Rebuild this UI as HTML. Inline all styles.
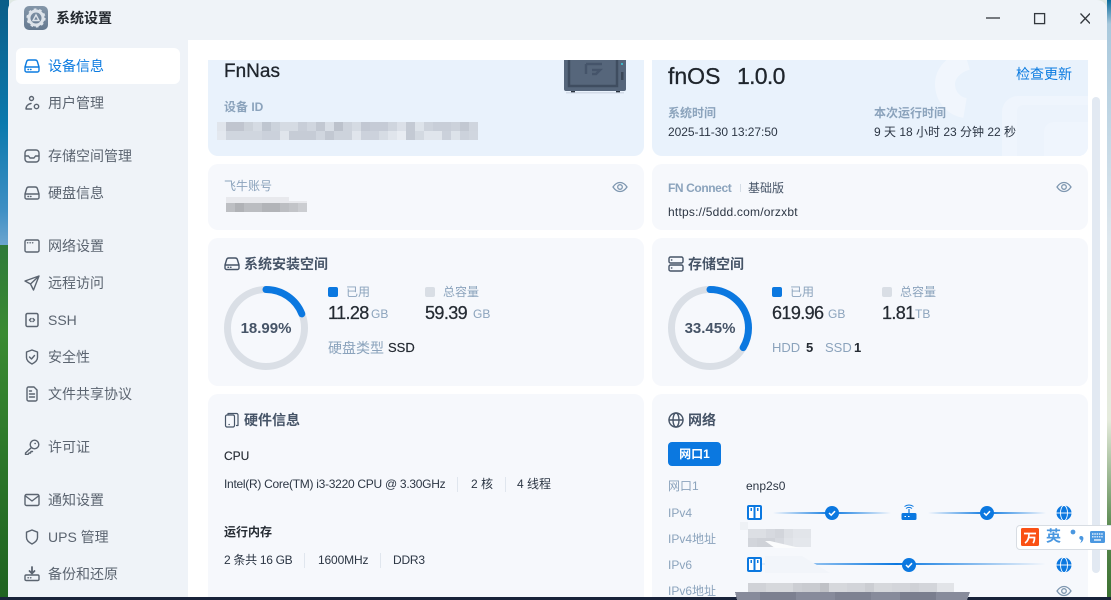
<!DOCTYPE html>
<html lang="zh"><head><meta charset="utf-8"><title>系统设置</title>
<style>
*{box-sizing:border-box}
html,body{margin:0;padding:0;width:1111px;height:600px;overflow:hidden;background:#dfe8e4}
body{position:relative;font-family:"Liberation Sans","Noto Sans CJK SC",sans-serif;font-size:12px;color:#2c3644}
.a{position:absolute}
.t{position:absolute;white-space:nowrap;line-height:20px;transform:translateY(-50%)}
.nav{font-size:14px;color:#5b6470;left:48px}
.ic{position:absolute;fill:none;stroke:#5b6470;stroke-width:1.4;stroke-linecap:round;stroke-linejoin:round}
.card{position:absolute;background:#f6f8fc;border-radius:10px}
.lb{color:#8ba3bc}
.h{font-size:14px;font-weight:bold;color:#465467}
.num{font-size:18px;color:#252b33;letter-spacing:-.6px;-webkit-text-stroke:.25px #252b33}
.u{font-size:12px;color:#8ba3bc}
.sep{position:absolute;width:1px;height:15px;background:#e0e6ee}
.sq{position:absolute;width:10px;height:10px;border-radius:2px}
.big{-webkit-text-stroke:.3px #1f252c;color:#1f252c}
</style></head><body>
<!-- desktop background -->
<div class="a" style="left:0;top:0;width:9px;height:247px;background:linear-gradient(#0a5d88,#0a79ad 50%,#3f8fc4 85%,#6ea6d0)"></div>
<div class="a" style="left:0;top:245px;width:9px;height:355px;background:linear-gradient(#2f7a3a,#3a8a32 25%,#2a7428 65%,#1f6220)"></div>
<div class="a" style="left:1107px;top:0;width:4px;height:600px;background:linear-gradient(#0a6a9c 0,#a8c8dc 4%,#dfe8ee 40%,#e5ebdc 70%,#5a8a50 88%,#3a7030)"></div>
<!-- window -->
<div class="a" style="left:8px;top:0;width:1099px;height:597px;background:#eff3f8;border-radius:10px 10px 0 0"></div>
<div class="a" style="left:188px;top:40px;width:919px;height:557px;background:#fff;border-radius:12px 0 0 0"></div>
<div class="a" style="left:0;top:597px;width:1111px;height:3px;background:#19233a"></div>

<!-- title -->
<svg class="a" style="left:24px;top:6px" width="24" height="24" viewBox="0 0 24 24"><defs><linearGradient id="g" x1="0" y1="0" x2="0" y2="1"><stop offset="0" stop-color="#8496a9"/><stop offset="1" stop-color="#657990"/></linearGradient></defs><rect width="24" height="24" rx="5" fill="url(#g)"/><circle cx="12" cy="12" r="7" fill="none" stroke="#dde3ea" stroke-width="3"/><circle cx="12" cy="12" r="8.4" fill="none" stroke="#dde3ea" stroke-width="2.4" stroke-dasharray="2.6 2.7"/><path d="M12 9l3 5.5H9z" fill="none" stroke="#dde3ea" stroke-width="1.4"/></svg>
<div class="t" style="left:56px;top:18px;font-size:14px;font-weight:bold;color:#23282e">系统设置</div>
<svg class="a" style="left:980px;top:8px" width="110" height="20" viewBox="0 0 110 20" fill="none" stroke="#33383e" stroke-width="1.3"><path d="M6 10h14"/><rect x="54.6" y="5.6" width="10" height="10"/><path d="M100.500 5.500l9.500 10M110 5.500l-9.500 10"/></svg>

<!-- sidebar -->
<div class="a" style="left:16px;top:48px;width:164px;height:36px;background:#fff;border-radius:6px"></div>
<div class="t nav" style="top:66px;color:#0b7be0">设备信息</div>
<div class="t nav" style="top:103px">用户管理</div>
<div class="t nav" style="top:156px">存储空间管理</div>
<div class="t nav" style="top:193px">硬盘信息</div>
<div class="t nav" style="top:246px">网络设置</div>
<div class="t nav" style="top:283px">远程访问</div>
<div class="t nav" style="top:320px">SSH</div>
<div class="t nav" style="top:357px">安全性</div>
<div class="t nav" style="top:394px">文件共享协议</div>
<div class="t nav" style="top:447px">许可证</div>
<div class="t nav" style="top:500px">通知设置</div>
<div class="t nav" style="top:537px">UPS 管理</div>
<div class="t nav" style="top:574px">备份和还原</div>

<svg class="ic" style="left:24px;top:58px;stroke:#0b7be0" width="16" height="16" viewBox="0 0 16 16"><path d="M1 9l1.500-5A2.500 2.500 0 0 1 5 2h6a2.500 2.500 0 0 1 2.500 2L15 9v3.500a1.500 1.500 0 0 1-1.500 1.500h-11A1.500 1.500 0 0 1 1 12.500zM1 9h14M4 11.500h.5M6.500 11.500h.5"/></svg>
<svg class="ic" style="left:24px;top:95px" width="16" height="16" viewBox="0 0 16 16"><circle cx="7.500" cy="3.500" r="2"/><path d="M2 14c0-3 2-5 5-5.500M2 14h5.500"/><circle cx="12.500" cy="11.500" r="2.200"/></svg>
<svg class="ic" style="left:24px;top:148px" width="16" height="16" viewBox="0 0 16 16"><rect x="1" y="2" width="14" height="12" rx="3"/><path d="M1 8h3.500l1.500 2h4l1.500-2H15"/></svg>
<svg class="ic" style="left:24px;top:185px" width="16" height="16" viewBox="0 0 16 16"><path d="M1 9l1.500-5A2.500 2.500 0 0 1 5 2h6a2.500 2.500 0 0 1 2.500 2L15 9v3.500a1.500 1.500 0 0 1-1.500 1.500h-11A1.500 1.500 0 0 1 1 12.500zM1 9h14M4 11.500h.5M6.500 11.500h.5"/></svg>
<svg class="ic" style="left:24px;top:238px" width="16" height="16" viewBox="0 0 16 16"><rect x="1" y="2" width="14" height="12" rx="1.500"/><path d="M3.500 4.800h.3M6 4.800h.3M8.500 4.800h.3"/></svg>
<svg class="ic" style="left:24px;top:275px" width="16" height="16" viewBox="0 0 16 16"><path d="M15 1L1 6l5.500 3L9.500 15zM6.500 9L15 1"/></svg>
<svg class="ic" style="left:24px;top:312px;stroke-width:1.500" width="16" height="16" viewBox="0 0 16 16"><rect x="2" y="1.500" width="12" height="13" rx="1.500"/><path d="M7 6.500L5.500 8 7 9.500M9 6.500L10.500 8 9 9.500"/></svg>
<svg class="ic" style="left:24px;top:349px" width="16" height="16" viewBox="0 0 16 16"><path d="M8 1l5.500 2v5.500c0 3-2.500 5-5.500 6.500-3-1.500-5.500-3.500-5.500-6.500V3zM5.500 8L7.500 10 10.500 6.500"/></svg>
<svg class="ic" style="left:24px;top:386px" width="16" height="16" viewBox="0 0 16 16"><path d="M3 2.500A1.500 1.500 0 0 1 4.500 1H10l3 3v9.500A1.500 1.500 0 0 1 11.500 15h-7A1.500 1.500 0 0 1 3 13.500zM5.500 8h5M5.500 11h5M5.500 5h2"/></svg>
<svg class="ic" style="left:24px;top:439px" width="16" height="16" viewBox="0 0 16 16"><circle cx="10.500" cy="5.500" r="4.300"/><path d="M7.500 8.500L1.500 14v1.500h2.500l1-1.500h1.500l.5-1.500h1.500"/><path d="M11 4.500h.3"/></svg>
<svg class="ic" style="left:24px;top:492px" width="16" height="16" viewBox="0 0 16 16"><rect x="1" y="2.500" width="14" height="11" rx="1.500"/><path d="M1.500 4L8 9l6.500-5"/></svg>
<svg class="ic" style="left:24px;top:529px" width="16" height="16" viewBox="0 0 16 16"><path d="M8 1l5.500 2.200v5.300c0 3-2.500 5-5.500 6.500-3-1.500-5.500-3.500-5.500-6.500V3.200z"/></svg>
<svg class="ic" style="left:24px;top:566px" width="16" height="16" viewBox="0 0 16 16"><path d="M8 1v6M5.500 5L8 7.500 10.500 5" stroke-width="1.800"/><rect x="1" y="9" width="14" height="5.500" rx="1.200"/><path d="M4 11.800h.4M6.500 11.800h.4"/></svg>

<!-- row 1 -->
<div class="card" style="left:208px;top:40px;width:436px;height:116px;background:#e9f2fc"></div>
<div class="card" style="left:652px;top:40px;width:436px;height:116px;background:#e9f2fc;overflow:hidden">
<svg class="a" style="left:0;top:0" width="436" height="116" fill="none"><path d="M315 20c-14 4-22 14-22 24 0 12 8 22 20 24" stroke="#f1f6fd" stroke-width="20"/><rect x="350" y="56" width="120" height="120" rx="16" fill="#eff5fd"/><rect x="365" y="65" width="100" height="100" rx="6" fill="#ecf3fc"/><rect x="392" y="82" width="60" height="60" rx="10" fill="#eff5fd"/></svg></div>
<div class="a" style="left:188px;top:40px;width:900px;height:20px;background:#fff"></div>
<svg class="a" style="left:564px;top:60px" width="62" height="34" viewBox="0 0 62 34"><rect x="0" y="-6" width="62" height="37" rx="2" fill="#56667b"/><rect x="5" y="-6" width="48" height="32" fill="none" stroke="#3f4d60" stroke-width="2.500"/><path d="M22 4h16M22 4v10M28 10h8l-4 4h-4" fill="none" stroke="#45546a" stroke-width="2.500"/><rect x="57" y="12" width="2.500" height="8" fill="#3a4757"/><rect x="57" y="3" width="2" height="2" fill="#3fb6c6"/><rect x="7" y="31" width="4" height="2" fill="#2a3440"/><rect x="52" y="31" width="4" height="2" fill="#2a3440"/><rect x="2" y="32" width="58" height="1.500" fill="#c7d2de" opacity=".7"/></svg>
<div class="t big" style="left:224px;top:72px;font-size:19px">FnNas</div>
<div class="t lb" style="left:224px;top:107px;font-weight:bold">设备 ID</div>
<svg class="a" style="left:217px;top:122px" width="261" height="18" shape-rendering="crispEdges">
<g><rect x="0" width="9" height="9" fill="#e0e5ec"/><rect x="9" width="18" height="9" fill="#c0c5cf"/><rect x="27" width="9" height="9" fill="#ccd2da"/><rect x="36" width="9" height="9" fill="#d5dbe3"/><rect x="45" width="9" height="9" fill="#bfc6d0"/><rect x="54" width="9" height="9" fill="#ccd3dc"/><rect x="63" width="18" height="9" fill="#d5dbe3"/><rect x="81" width="9" height="9" fill="#c8ced8"/><rect x="90" width="9" height="9" fill="#d0d6df"/><rect x="99" width="9" height="9" fill="#c2c8d2"/><rect x="108" width="9" height="9" fill="#d8dee6"/><rect x="117" width="9" height="9" fill="#bcc2cc"/><rect x="126" width="9" height="9" fill="#cdd3dc"/><rect x="135" width="9" height="9" fill="#d5dbe3"/><rect x="144" width="9" height="9" fill="#c2c8d3"/><rect x="153" width="18" height="9" fill="#c5cbd6"/><rect x="171" width="9" height="9" fill="#cfd5de"/><rect x="180" width="9" height="9" fill="#dbe0e8"/><rect x="189" width="9" height="9" fill="#c4cad4"/><rect x="198" width="9" height="9" fill="#dde3ea"/><rect x="207" width="9" height="9" fill="#cdd3dc"/><rect x="216" width="18" height="9" fill="#c8ced8"/><rect x="234" width="9" height="9" fill="#ccd2db"/><rect x="243" width="9" height="9" fill="#c2c8d2"/><rect x="252" width="9" height="9" fill="#cfd5de"/></g>
<g transform="translate(0 9)"><rect width="9" height="9" fill="#e3e8ef"/><rect x="9" width="36" height="9" fill="#d0d6df"/><rect x="45" width="18" height="9" fill="#cbd1db"/><rect x="63" width="9" height="9" fill="#e0e5ec"/><rect x="72" width="27" height="9" fill="#c6ccd6"/><rect x="99" width="9" height="9" fill="#d0d6df"/><rect x="108" width="9" height="9" fill="#c2c8d2"/><rect x="117" width="18" height="9" fill="#cdd3dc"/><rect x="135" width="9" height="9" fill="#e0e5ec"/><rect x="144" width="18" height="9" fill="#ccd2dc"/><rect x="162" width="9" height="9" fill="#d6dce4"/><rect x="171" width="9" height="9" fill="#e0e5ec"/><rect x="180" width="9" height="9" fill="#e8ecf2"/><rect x="189" width="9" height="9" fill="#c4cad4"/><rect x="198" width="9" height="9" fill="#d3d9e1"/><rect x="207" width="18" height="9" fill="#e0e5ec"/><rect x="225" width="9" height="9" fill="#cbd1db"/><rect x="234" width="9" height="9" fill="#dde3ea"/><rect x="243" width="9" height="9" fill="#ccd2dc"/><rect x="252" width="9" height="9" fill="#d0d6df"/></g></svg>

<div class="t big" style="left:668px;top:76px;font-size:23px">fnOS</div>
<div class="t big" style="left:737px;top:76px;font-size:23px;letter-spacing:-.7px">1.0.0</div>
<div class="t" style="left:1016px;top:74px;font-size:14px;color:#0b7be0">检查更新</div>
<div class="t lb" style="left:668px;top:113px;font-weight:bold">系统时间</div>
<div class="t lb" style="left:874px;top:113px;font-weight:bold">本次运行时间</div>
<div class="t" style="left:668px;top:132px;letter-spacing:-.05px">2025-11-30 13:27:50</div>
<div class="t" style="left:874px;top:132px">9 天 18 小时 23 分钟 22 秒</div>

<!-- row 2 -->
<div class="card" style="left:208px;top:164px;width:436px;height:66px"></div>
<div class="card" style="left:652px;top:164px;width:436px;height:66px"></div>
<div class="t lb" style="left:224px;top:186px">飞牛账号</div>
<svg class="a" style="left:217px;top:197px" width="90" height="18" shape-rendering="crispEdges"><rect x="9" y="0" width="63" height="6" fill="#e8e9ed"/><rect x="72" y="4" width="18" height="5" fill="#e8e9ed"/><rect x="9" y="6" width="9" height="9" fill="#bdbfc3"/><rect x="18" y="6" width="9" height="9" fill="#b0b2b6"/><rect x="27" y="6" width="18" height="9" fill="#bbbdc1"/><rect x="45" y="6" width="18" height="9" fill="#b2b4b8"/><rect x="63" y="6" width="9" height="9" fill="#bcbec2"/><rect x="72" y="6" width="9" height="9" fill="#c2c4c8"/><rect x="81" y="6" width="9" height="9" fill="#cbcdd1"/></svg>
<svg class="a" style="left:612px;top:179px" width="16" height="16" viewBox="0 0 16 16" fill="none" stroke="#7e97b0" stroke-width="1.300"><path d="M1 8c2-3 4.500-4.500 7-4.500S13 5 15 8c-2 3-4.500 4.500-7 4.500S3 11 1 8z"/><circle cx="8" cy="8" r="2.300"/></svg>
<div class="t lb" style="left:668px;top:188px;font-weight:bold;letter-spacing:-.4px">FN Connect</div>
<div class="a" style="left:740px;top:184px;width:1px;height:8px;background:#d5dde6"></div>
<div class="t" style="left:748px;top:188px;color:#465467">基础版</div>
<div class="t" style="left:668px;top:212px;letter-spacing:.22px">https://5ddd.com/orzxbt</div>
<svg class="a" style="left:1056px;top:179px" width="16" height="16" viewBox="0 0 16 16" fill="none" stroke="#7e97b0" stroke-width="1.300"><path d="M1 8c2-3 4.500-4.500 7-4.500S13 5 15 8c-2 3-4.500 4.500-7 4.500S3 11 1 8z"/><circle cx="8" cy="8" r="2.300"/></svg>

<!-- row 3 -->
<div class="card" style="left:208px;top:238px;width:436px;height:148px"></div>
<div class="card" style="left:652px;top:238px;width:436px;height:148px"></div>
<svg class="ic" style="left:224px;top:256px;stroke:#465467" width="16" height="16" viewBox="0 0 16 16"><path d="M1 9l1.500-5A2.500 2.500 0 0 1 5 2h6a2.500 2.500 0 0 1 2.500 2L15 9v3a1.500 1.500 0 0 1-1.500 1.500h-11A1.500 1.500 0 0 1 1 12zM1 9h14M4 11.300h.5M6.500 11.300h.5"/></svg>
<div class="t h" style="left:244px;top:264px">系统安装空间</div>
<svg class="a" style="left:224px;top:286px" width="84" height="84" viewBox="0 0 84 84" fill="none"><circle cx="42" cy="42" r="38.500" stroke="#dadfe6" stroke-width="7"/><circle cx="42" cy="42" r="38.500" stroke="#0b78e0" stroke-width="7" stroke-linecap="round" stroke-dasharray="45.900 242" transform="rotate(-90 42 42)"/></svg>
<div class="t" style="left:224px;top:329px;width:84px;text-align:center;font-size:15px;font-weight:bold;color:#465467">18.99%</div>
<div class="sq" style="left:328px;top:287px;background:#0b78e0"></div>
<div class="t lb" style="left:346px;top:292px">已用</div>
<div class="sq" style="left:425px;top:287px;background:#d9dee5"></div>
<div class="t lb" style="left:443px;top:292px">总容量</div>
<div class="t num" style="left:328px;top:313px">11.28</div><div class="t u" style="left:371px;top:314px">GB</div>
<div class="t num" style="left:425px;top:313px">59.39</div><div class="t u" style="left:473px;top:314px">GB</div>
<div class="t lb" style="left:328px;top:348px;font-size:14px">硬盘类型</div>
<div class="t" style="left:388px;top:348px;font-size:13px;color:#252b33;-webkit-text-stroke:.2px #252b33">SSD</div>

<svg class="ic" style="left:668px;top:256px;stroke:#465467" width="16" height="16" viewBox="0 0 16 16"><rect x="1" y="1" width="14" height="6" rx="1.500"/><rect x="1" y="9" width="14" height="6" rx="1.500"/><path d="M3.500 4h.3M3.500 12h.3"/></svg>
<div class="t h" style="left:688px;top:264px">存储空间</div>
<svg class="a" style="left:668px;top:286px" width="84" height="84" viewBox="0 0 84 84" fill="none"><circle cx="42" cy="42" r="38.500" stroke="#dadfe6" stroke-width="7"/><circle cx="42" cy="42" r="38.500" stroke="#0b78e0" stroke-width="7" stroke-linecap="round" stroke-dasharray="80.900 242" transform="rotate(-90 42 42)"/></svg>
<div class="t" style="left:668px;top:329px;width:84px;text-align:center;font-size:15px;font-weight:bold;color:#465467">33.45%</div>
<div class="sq" style="left:772px;top:287px;background:#0b78e0"></div>
<div class="t lb" style="left:790px;top:292px">已用</div>
<div class="sq" style="left:882px;top:287px;background:#d9dee5"></div>
<div class="t lb" style="left:900px;top:292px">总容量</div>
<div class="t num" style="left:772px;top:313px">619.96</div><div class="t u" style="left:828px;top:314px">GB</div>
<div class="t num" style="left:882px;top:313px">1.81</div><div class="t u" style="left:915px;top:314px">TB</div>
<div class="t lb" style="left:772px;top:348px;font-size:13px">HDD</div><div class="t" style="left:806px;top:348px;font-size:13px;font-weight:bold;color:#252b33">5</div>
<div class="t lb" style="left:825px;top:348px;font-size:13px">SSD</div><div class="t" style="left:854px;top:348px;font-size:13px;font-weight:bold;color:#252b33">1</div>

<!-- row 4 -->
<div class="card" style="left:208px;top:394px;width:436px;height:203px;border-radius:10px 10px 0 0"></div>
<div class="card" style="left:652px;top:394px;width:436px;height:203px;border-radius:10px 10px 0 0"></div>
<svg class="ic" style="left:224px;top:412px;stroke:#465467;stroke-width:1.200" width="16" height="16" viewBox="0 0 16 16"><rect x="1.500" y="3" width="9" height="12" rx="1.500"/><path d="M4 3V1.500h8.500A1.500 1.500 0 0 1 14 3v10.500h-1.500M5 12.500h.3"/></svg>
<div class="t h" style="left:244px;top:420px">硬件信息</div>
<div class="t" style="left:224px;top:456px;color:#252b33;-webkit-text-stroke:.15px #252b33">CPU</div>
<div class="t" style="left:224px;top:484px;letter-spacing:-.28px">Intel(R) Core(TM) i3-3220 CPU @ 3.30GHz</div>
<div class="sep" style="left:457px;top:477px"></div>
<div class="t" style="left:471px;top:484px">2 核</div>
<div class="sep" style="left:505px;top:477px"></div>
<div class="t" style="left:517px;top:484px">4 线程</div>
<div class="t" style="left:224px;top:532px;font-weight:bold;color:#252b33">运行内存</div>
<div class="t" style="left:224px;top:560px;letter-spacing:-.3px">2 条共 16 GB</div>
<div class="sep" style="left:304px;top:553px"></div>
<div class="t" style="left:318px;top:560px;letter-spacing:-.15px">1600MHz</div>
<div class="sep" style="left:380px;top:553px"></div>
<div class="t" style="left:393px;top:560px;letter-spacing:-.2px">DDR3</div>

<svg class="ic" style="left:668px;top:412px;stroke:#465467" width="16" height="16" viewBox="0 0 16 16"><circle cx="8" cy="8" r="7"/><ellipse cx="8" cy="8" rx="3" ry="7"/><path d="M1 8h14"/></svg>
<div class="t h" style="left:688px;top:420px">网络</div>
<div class="a" style="left:668px;top:442px;width:53px;height:24px;background:#0b78e0;border-radius:4px;color:#fff;font-weight:bold;text-align:center;line-height:24px">网口1</div>
<div class="t lb" style="left:668px;top:486px">网口1</div><div class="t" style="left:746px;top:486px">enp2s0</div>
<div class="t lb" style="left:668px;top:513px">IPv4</div>
<div class="t lb" style="left:668px;top:539px">IPv4地址</div>
<div class="t lb" style="left:668px;top:565px">IPv6</div>
<div class="t lb" style="left:668px;top:591px">IPv6地址</div>

<svg class="a" style="left:740px;top:500px" width="340" height="100" viewBox="740 500 340 100">
<defs>
<linearGradient id="l"><stop offset="0" stop-color="#0b78e0" stop-opacity="0"/><stop offset=".5" stop-color="#0b78e0"/><stop offset="1" stop-color="#0b78e0" stop-opacity="0"/></linearGradient>
<g id="port"><rect x="0" y="0" width="15" height="15" rx="2" fill="#0b78e0"/><rect x="2" y="2" width="4.500" height="11" fill="#fff"/><rect x="8.500" y="2" width="4.500" height="11" fill="#fff"/><rect x="3.500" y="3" width="1.500" height="3" fill="#0b78e0"/><rect x="10" y="3" width="1.500" height="3" fill="#0b78e0"/></g>
<g id="ck"><circle r="7" fill="#0b78e0"/><path d="M-3 0l2.200 2.200L3 -1.800" fill="none" stroke="#fff" stroke-width="1.500"/></g>
<g id="gl"><circle r="7.500" fill="#0b78e0"/><ellipse rx="3.500" ry="7.500" fill="none" stroke="#fff" stroke-width=".9"/><path d="M-7.500 0h15" stroke="#fff" stroke-width=".9"/></g>
</defs>
<rect x="773" y="512" width="118" height="2" fill="url(#l)"/>
<rect x="928" y="512" width="118" height="2" fill="url(#l)"/>
<rect x="748" y="563" width="298" height="2" fill="url(#l)"/>
<use href="#port" x="747" y="505"/>
<use href="#port" x="747" y="557"/>
<use href="#ck" x="832" y="513"/>
<use href="#ck" x="987" y="513"/>
<use href="#ck" x="909" y="565"/>
<use href="#gl" x="1064" y="513"/>
<use href="#gl" x="1064" y="565"/>
<rect x="901.500" y="513" width="15" height="7" rx="1.500" fill="#0b78e0"/>
<path d="M909 513v-4" stroke="#0b78e0" stroke-width="1.200"/>
<path d="M906 508.500c2-1.500 4-1.500 6 0M904.500 506.500c3-2 6-2 9 0" fill="none" stroke="#0b78e0" stroke-width="1"/>
<path d="M904.500 516.500h1.500M908 516.500h1.500" stroke="#fff"/>
<!-- blur smear -->
<g shape-rendering="crispEdges">
<rect x="739" y="522" width="9" height="8" fill="#eef1f5"/><rect x="748" y="529" width="18" height="9" fill="#dcdfe4"/><rect x="766" y="529" width="9" height="9" fill="#d6d9df"/><rect x="775" y="529" width="9" height="9" fill="#d2d5db"/><rect x="784" y="529" width="9" height="9" fill="#dde0e5"/><rect x="793" y="529" width="18" height="9" fill="#e2e5ea"/>
<rect x="748" y="538" width="9" height="9" fill="#d2d5db"/><rect x="757" y="538" width="18" height="9" fill="#cfd2d8"/><rect x="775" y="538" width="9" height="9" fill="#d6d9df"/><rect x="784" y="538" width="9" height="9" fill="#e0e3e8"/><rect x="793" y="538" width="18" height="9" fill="#e4e7ec"/>
</g>
<path d="M765 541l5 0 30 7H775z" fill="#fbfcfd"/>
<path d="M765 556H802L830 573H765z" fill="#f2f5fa"/>
<g shape-rendering="crispEdges">
<rect x="748" y="583" width="18" height="9" fill="#d0d2d7"/><rect x="766" y="583" width="27" height="9" fill="#d6d8dc"/><rect x="793" y="583" width="9" height="9" fill="#ccced3"/><rect x="802" y="583" width="18" height="9" fill="#c9cbd0"/><rect x="820" y="583" width="9" height="9" fill="#bfc1c6"/><rect x="829" y="583" width="18" height="9" fill="#d6d8dc"/><rect x="847" y="583" width="18" height="9" fill="#d2d4d9"/><rect x="865" y="583" width="9" height="9" fill="#cbcdd2"/><rect x="874" y="583" width="18" height="9" fill="#d6d8dc"/><rect x="892" y="583" width="18" height="9" fill="#d3d5da"/><rect x="910" y="583" width="9" height="9" fill="#cfd1d6"/><rect x="919" y="583" width="18" height="9" fill="#d3d5da"/><rect x="937" y="583" width="17" height="9" fill="#e2e4e8"/>
</g>
</svg>
<svg class="a" style="left:735px;top:592px" width="235" height="8" viewBox="0 0 235 8" shape-rendering="crispEdges"><path d="M0 0H235L232 8H2z" fill="#878b9b"/><rect x="25" width="36" height="8" fill="#7c8090"/><rect x="100" width="36" height="8" fill="#7e8292"/><rect x="165" width="36" height="8" fill="#7a7e8e"/></svg>
<svg class="a" style="left:1056px;top:583px" width="16" height="16" viewBox="0 0 16 16" fill="none" stroke="#7e97b0" stroke-width="1.300"><path d="M1 8c2-3 4.500-4.500 7-4.500S13 5 15 8c-2 3-4.500 4.500-7 4.500S3 11 1 8z"/><circle cx="8" cy="8" r="2.300"/></svg>

<!-- scrollbar -->
<div class="a" style="left:1092px;top:97px;width:8px;height:476px;background:#e2e9f2;border-radius:4px"></div>

<!-- IME bar -->
<div class="a" style="left:1016px;top:525px;width:100px;height:25px;background:#fff;border:1px solid #d8dde3;border-radius:4px"></div>
<svg class="a" style="left:1021px;top:528px" width="18" height="18" viewBox="0 0 18 18"><rect width="18" height="18" rx="1.500" fill="#fa5014"/><path d="M3 5.500h12M8 5.500c0 5-1.500 8-4 9.500M7.500 9.500h6c0 2.500-.5 4.500-1.500 5.500" fill="none" stroke="#fff" stroke-width="1.700"/></svg>
<div class="t" style="left:1046px;top:537px;font-size:15px;font-weight:bold;color:#4a97e0">英</div>
<svg class="a" style="left:1068px;top:528px" width="40" height="18" viewBox="0 0 40 18"><circle cx="5" cy="4" r="2.400" fill="#4a97e0"/><path d="M13 8c1.700 0 2.400 1.100 2.400 2.300 0 2.200-1.200 3.800-3.400 4.900 .9-1.100 1.300-2.200 1.300-3.300-1.100 0-2-.9-2-2s.7-1.900 1.700-1.900z" fill="#4a97e0"/><rect x="22" y="3" width="15" height="12" rx="1.500" fill="#4a97e0"/><path d="M24 6h11M24 8.800h11" stroke="#fff" stroke-width="1.200" stroke-dasharray="1.500 .8"/><path d="M26 12h7" stroke="#fff" stroke-width="1.300"/></svg>
</body></html>
